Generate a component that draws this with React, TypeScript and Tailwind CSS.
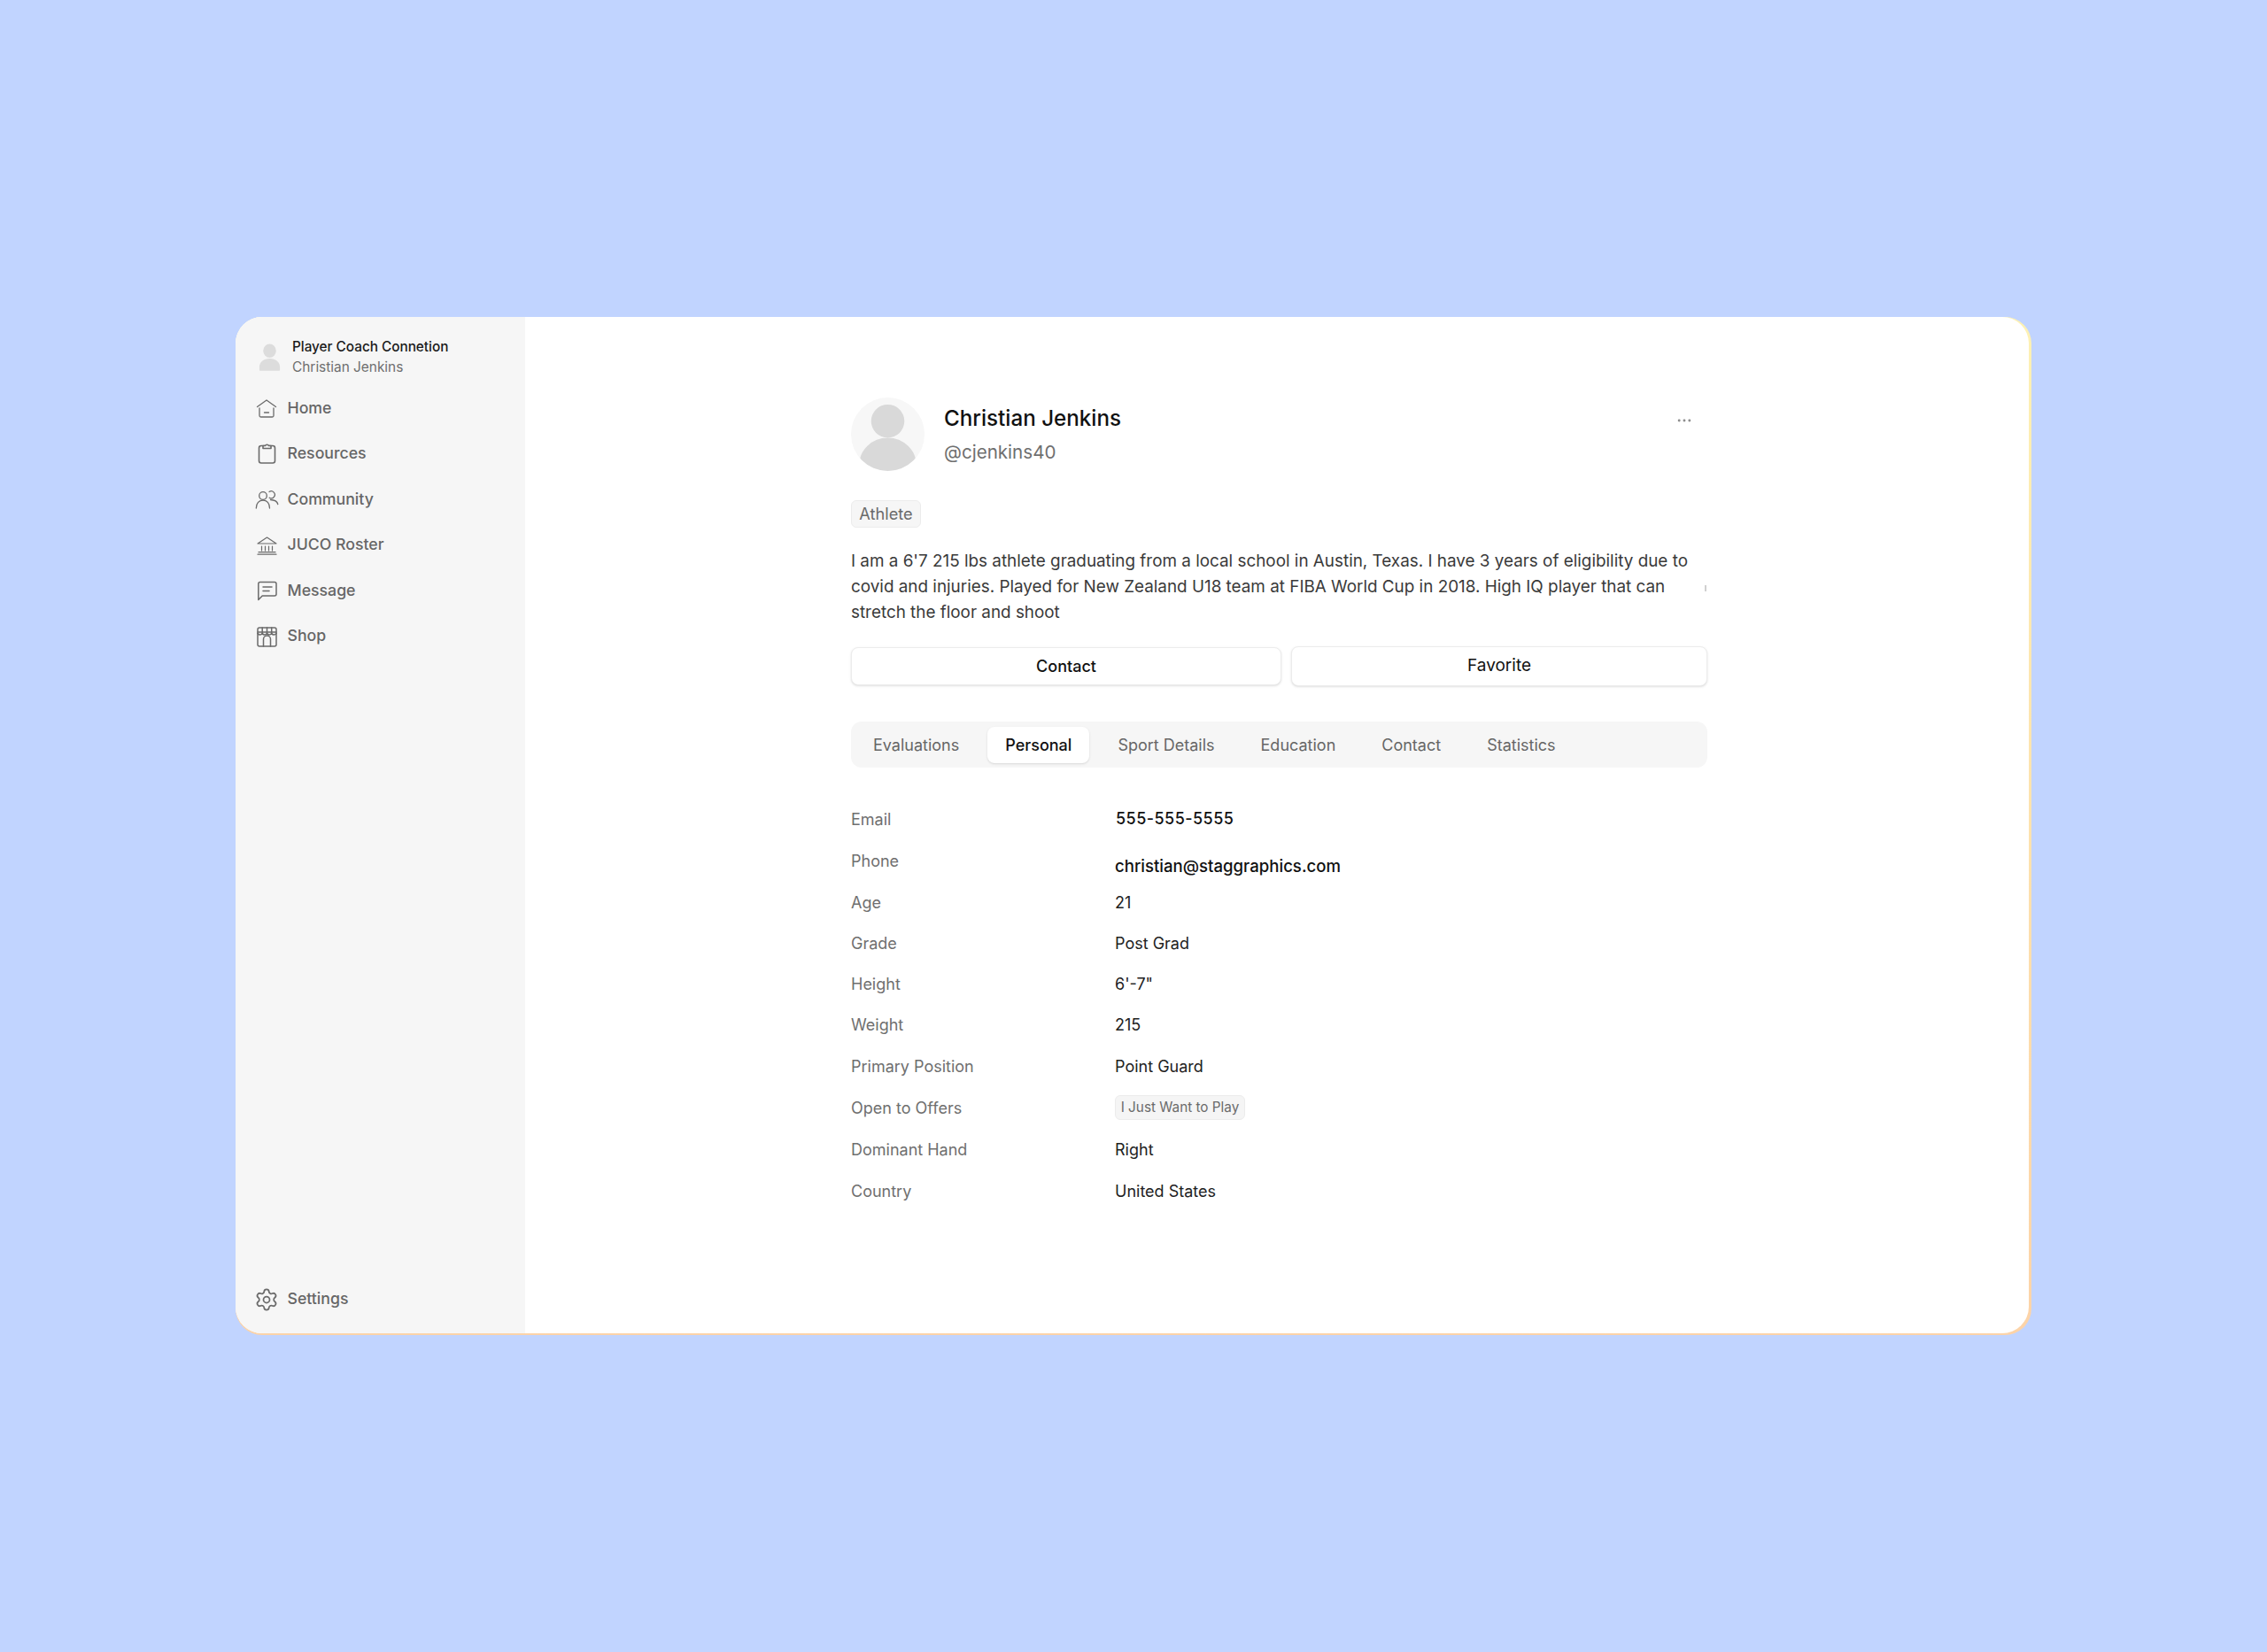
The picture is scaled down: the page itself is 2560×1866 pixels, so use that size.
import React from "react";
import { Settings, Ellipsis } from "lucide-react";

const ink = "#6b6b6b";

const Icon = ({ children, sw = 1.4 }: { children: React.ReactNode; sw?: number }) => (
  <svg width="24" height="24" viewBox="0 0 24 24" fill="none" stroke={ink} strokeWidth={sw} strokeLinecap="round" strokeLinejoin="round" className="overflow-visible">
    {children}
  </svg>
);

const nav = [
  {
    label: "Home",
    icon: (
      <Icon sw={1.3}>
        <path d="M1.5 10.5 12 3l10.5 7.5" />
        <path d="M4 12v8.5A1.5 1.5 0 0 0 5.5 22h13a1.5 1.5 0 0 0 1.5-1.5V12" />
        <path d="M9.5 17h5" />
      </Icon>
    ),
  },
  {
    label: "Resources",
    icon: (
      <Icon sw={1.6}>
        <rect x="3.5" y="3.5" width="18" height="19.5" rx="2.5" />
        <path d="M8 6.5V3.5h2.5a2.2 2.2 0 0 1 4 0H17v3z" fill="#f6f6f6" />
      </Icon>
    ),
  },
  {
    label: "Community",
    icon: (
      <Icon sw={1.3}>
        <circle cx="8" cy="8" r="4.3" />
        <path d="M0.3 22c0-5.5 3.3-9 7.7-9s7.5 3.5 7.5 9" />
        <path d="M15.2 10.2A4 4 0 1 0 15 3.5" />
        <path d="M16.5 12.5c4 .2 7.5 1.5 8.3 5" />
      </Icon>
    ),
  },
  {
    label: "JUCO Roster",
    icon: (
      <Icon sw={1.2}>
        <path d="M2 10 12.5 3 23 10z" />
        <path d="M6.5 13v5M10.5 13v5M14.5 13v5M18.5 13v5" />
        <path d="M3 19.7h19M2 22.2h21" />
      </Icon>
    ),
  },
  {
    label: "Message",
    icon: (
      <Icon sw={1.5}>
        <path d="M2.8 22.5V4.5a2 2 0 0 1 2-2H21a2 2 0 0 1 2 2V16a2 2 0 0 1-2 2H7.2z" />
        <path d="M8 8h10M8 12.5h7" />
      </Icon>
    ),
  },
  {
    label: "Shop",
    icon: (
      <Icon sw={1.5}>
        <rect x="2" y="2" width="21" height="21" rx="2" />
        <path d="M2 7h21" />
        <path d="M2 8.5c1.3 2 3.8 2 5.2 0 1.3 2 3.8 2 5.3 0 1.3 2 3.8 2 5.2 0 1.3 2 3.8 2 5.3 0" />
        <path d="M7.2 2v6.5M12.5 2v6.5M17.7 2v6.5" />
        <path d="M8.5 23v-8a4 4 0 0 1 8 0v8" />
      </Icon>
    ),
  },
];

const tabs = ["Evaluations", "Personal", "Sport Details", "Education", "Contact", "Statistics"];

const rows: { k: string; v: React.ReactNode; h: string }[] = [
  { k: "Email", v: <span className="-translate-y-px translate-x-px font-medium text-[#111] text-[18px] tracking-[0.45px]">555-555-5555</span>, h: "h-[47px]" },
  { k: "Phone", v: <span className="translate-y-[6px] font-medium text-[18.6px] text-[#111]">christian@staggraphics.com</span>, h: "h-[47px]" },
  { k: "Age", v: "21", h: "h-[46px]" },
  { k: "Grade", v: "Post Grad", h: "h-[46px]" },
  { k: "Height", v: `6'-7"`, h: "h-[46px]" },
  { k: "Weight", v: "215", h: "h-[47px]" },
  { k: "Primary Position", v: "Point Guard", h: "h-[46px]" },
  {
    k: "Open to Offers",
    v: (
      <span className="flex h-[28px] w-[147px] items-center justify-center rounded-md border border-[#ececec] bg-[#f5f5f5] text-[15.3px] text-[#6b6b6b]">
        I Just Want to Play
      </span>
    ),
    h: "h-[48px]",
  },
  { k: "Dominant Hand", v: "Right", h: "h-[47px]" },
  { k: "Country", v: "United States", h: "h-[46px]" },
];

export default function App() {
  return (
    <div className="min-h-[1866px] bg-[#c1d4ff] pl-[266px] pt-[358px] font-['Inter',sans-serif]">
      <div className="h-[1150px] w-[2028px] rounded-[30px] bg-linear-to-b from-[#fdf1b4] to-[#fcd3a8] pb-[2px] pr-[3px]">
        <div className="flex h-full overflow-hidden rounded-[30px] bg-white">
          <aside className="flex w-[327px] shrink-0 flex-col bg-[#f6f6f6] pb-[25px] pl-[23px] pt-[24px]">
            <div className="flex items-center gap-[12px] pl-[2px]">
              <svg viewBox="0 0 28 32" className="h-[32px] w-[27px]" fill="#dcdcdc">
                <ellipse cx="14" cy="9" rx="7.5" ry="8" />
                <path d="M2 32v-4c0-6 5-10 12-10s12 4 12 10v4c0 .5-24 .5-24 0z" />
              </svg>
              <div className="flex flex-col gap-[4px]">
                <span className="text-[15.3px] leading-[19px] font-medium text-[#1a1a1a]">Player Coach Connetion</span>
                <span className="text-[15.4px] leading-[19px] text-[#6f6f6f]">Christian Jenkins</span>
              </div>
            </div>
            <nav className="mt-[11px] flex flex-col">
              {nav.map((n) => (
                <div key={n.label} className="flex h-[51.6px] items-center gap-[11.5px]">
                  <span className="flex w-[24px] justify-center">{n.icon}</span>
                  <span className="text-[17.7px] font-medium text-[#666]">{n.label}</span>
                </div>
              ))}
            </nav>
            <div className="mt-auto flex items-center gap-[11.5px]">
              <span className="flex h-[24px] w-[24px] items-center justify-center">
                <Settings size={28} strokeWidth={1.5} color={ink} className="shrink-0" />
              </span>
              <span className="text-[17.7px] font-medium text-[#666]">Settings</span>
            </div>
          </aside>
          <main className="flex-1 pl-[368px] pt-[91px]">
            <div className="w-[967px]">
              <div className="flex items-start">
                <div className="relative h-[83px] w-[83px] overflow-hidden rounded-full bg-[#f7f7f7]">
                  <svg viewBox="0 0 84 84" className="absolute inset-0 h-full w-full" fill="#d9d9d9">
                    <circle cx="42" cy="27" r="19" />
                    <ellipse cx="42" cy="78" rx="33" ry="32" />
                  </svg>
                </div>
                <div className="ml-[22px] flex flex-1 flex-col pt-[6px]">
                  <span className="text-[24.2px] leading-[36px] font-medium text-[#111]">Christian Jenkins</span>
                  <span className="mt-[2px] text-[20.6px] leading-[36px] text-[#6f6f6f]">@cjenkins40</span>
                </div>
                <Ellipsis size={20} strokeWidth={1.5} color="#8a8a8a" className="mr-[16px] mt-[16px]" />
              </div>
              <div className="mt-[33px] flex h-[31px] w-[79px] items-center justify-center rounded-md border border-[#ececec] bg-[#f6f6f6] text-[18.2px] text-[#6b6b6b]">
                Athlete
              </div>
              <div className="relative mt-[23px]">
                <p className="text-[18.87px] leading-[29px] text-[#3a3a3a]">
                  I am a 6'7 215 lbs athlete graduating from a local school in Austin, Texas. I have 3 years of eligibility due to covid and injuries. Played for New Zealand U18 team at FIBA World Cup in 2018. High IQ player that can stretch the floor and shoot
                </p>
                <span className="absolute right-[1px] top-[42px] h-[7px] w-[2px] bg-[#d0d0d0]" />
              </div>
              <div className="mt-[25px] flex h-[43px] items-center gap-[11px]">
                <button className="h-[43px] w-[486px] rounded-lg border border-[#ececec] bg-white text-[18px] font-medium text-[#111] shadow-sm">Contact</button>
                <button className="h-[45px] flex-1 rounded-lg border border-[#ececec] bg-white text-[19px] text-[#111] shadow-sm">Favorite</button>
              </div>
              <div className="mt-[41px] flex h-[52px] items-center gap-[12px] rounded-xl bg-[#f6f6f6] px-[5px]">
                {tabs.map((t) => (
                  <div
                    key={t}
                    className={
                      t === "Personal"
                        ? "flex h-[41px] items-center rounded-lg bg-white px-[20px] text-[18px] font-medium text-[#111] shadow-sm"
                        : "flex h-[41px] items-center px-[20px] text-[18px] text-[#666]"
                    }
                  >
                    {t}
                  </div>
                ))}
              </div>
              <div className="mt-[35px] flex flex-col">
                {rows.map((r) => (
                  <div key={r.k} className={`grid grid-cols-[298px_1fr] items-center text-[18px] ${r.h}`}>
                    <span className="text-[#6f6f6f]">{r.k}</span>
                    <span className="flex text-[#222]">{r.v}</span>
                  </div>
                ))}
              </div>
            </div>
          </main>
        </div>
      </div>
    </div>
  );
}
